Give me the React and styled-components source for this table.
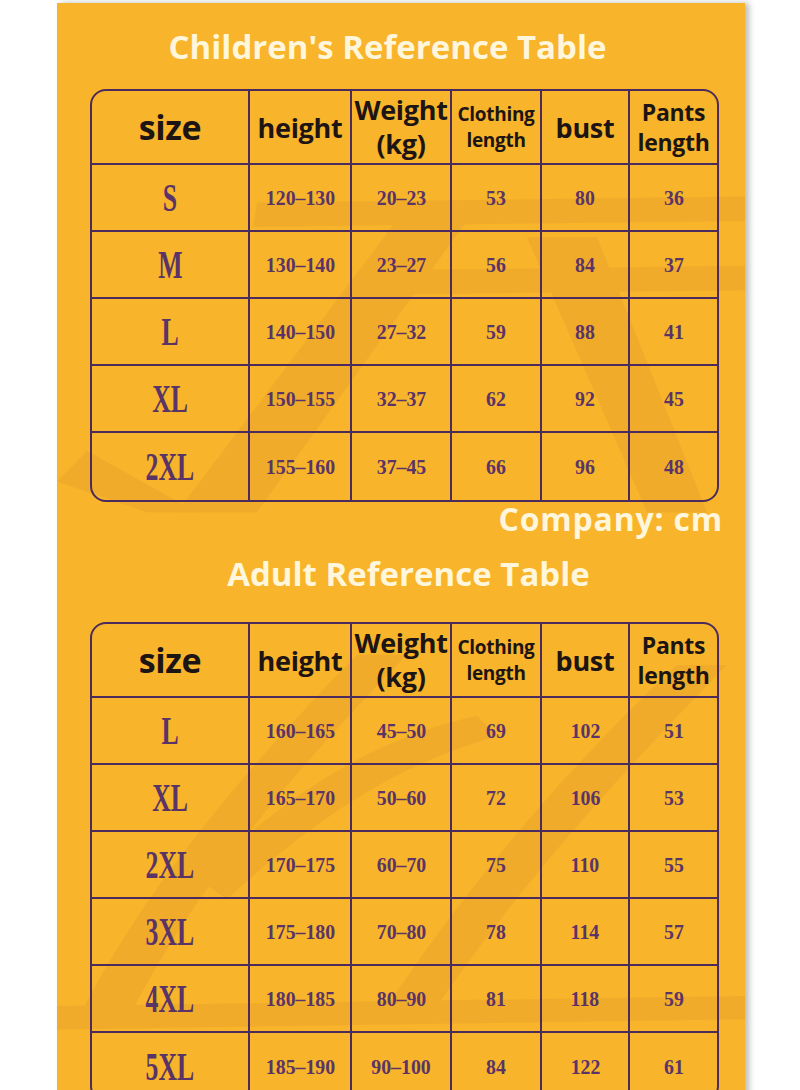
import styled, { createGlobalStyle } from 'styled-components';

const childRows = [
  ['S', '120-130', '20-23', '53', '80', '36'],
  ['M', '130-140', '23-27', '56', '84', '37'],
  ['L', '140-150', '27-32', '59', '88', '41'],
  ['XL', '150-155', '32-37', '62', '92', '45'],
  ['2XL', '155-160', '37-45', '66', '96', '48'],
];

const adultRows = [
  ['L', '160-165', '45-50', '69', '102', '51'],
  ['XL', '165-170', '50-60', '72', '106', '53'],
  ['2XL', '170-175', '60-70', '75', '110', '55'],
  ['3XL', '175-180', '70-80', '78', '114', '57'],
  ['4XL', '180-185', '80-90', '81', '118', '59'],
  ['5XL', '185-190', '90-100', '84', '122', '61'],
];

function Watermark() {
  return (
    <Styled.Watermark viewBox="0 0 688 1090" preserveAspectRatio="none">
      <g fill="#d98f2c" opacity="0.22">
        <path d="M200 196 L688 190 L688 214 L196 220 Z" />
        <path d="M360 262 L688 258 L688 282 L356 286 Z" />
        <path d="M120 500 L200 500 L420 200 L350 200 Z" />
        <path d="M470 230 L540 230 L650 500 L590 500 Z" />
        <path d="M0 470 L30 440 L140 500 L90 500 Z" />
        <path d="M20 1000 C80 880 180 760 300 640 L350 640 C230 760 130 880 70 1000 Z" />
        <path d="M320 1000 C400 880 500 760 620 650 L670 650 C560 760 450 880 370 1000 Z" />
        <path d="M0 985 L688 975 L688 998 L0 1008 Z" />
        <path d="M140 860 C250 760 330 720 420 700 L440 720 C350 745 270 790 170 880 Z" />
      </g>
    </Styled.Watermark>
  );
}

function SizeTable({ rows, top }) {
  return (
    <Styled.Table $top={top}>
      <Styled.HeadCell>
        <Styled.HeadText $size={34}>size</Styled.HeadText>
      </Styled.HeadCell>
      <Styled.HeadCell>
        <Styled.HeadText $size={27}>height</Styled.HeadText>
      </Styled.HeadCell>
      <Styled.HeadCell>
        <Styled.HeadText $size={27} $lh={34}>
          Weight
          <br />
          (kg)
        </Styled.HeadText>
      </Styled.HeadCell>
      <Styled.HeadCell>
        <Styled.HeadText $size={19} $lh={26}>
          Clothing
          <br />
          length
        </Styled.HeadText>
      </Styled.HeadCell>
      <Styled.HeadCell>
        <Styled.HeadText $size={27}>bust</Styled.HeadText>
      </Styled.HeadCell>
      <Styled.HeadCell $last>
        <Styled.HeadText $size={23} $lh={30}>
          Pants
          <br />
          length
        </Styled.HeadText>
      </Styled.HeadCell>
      {rows.map((row, r) =>
        row.map((value, c) => (
          <Styled.Cell key={`${r}-${c}`} $last={c === row.length - 1} $bottom={r === rows.length - 1}>
            {c === 0 ? (
              <Styled.SizeLabel>{value}</Styled.SizeLabel>
            ) : (
              <Styled.Value>{value.replace('-', '\u2013')}</Styled.Value>
            )}
          </Styled.Cell>
        ))
      )}
    </Styled.Table>
  );
}

export default function App() {
  return (
    <>
      <GlobalStyle />
      <Styled.Page>
        <Styled.Panel>
          <Watermark />
          <Styled.Content>
            <Styled.Title $shift={-34} $top={20}>
              Children's Reference Table
            </Styled.Title>
            <SizeTable rows={childRows} top={18} />
            <Styled.Unit>Company: cm</Styled.Unit>
            <Styled.Title $shift={4} $top={12}>
              Adult Reference Table
            </Styled.Title>
            <SizeTable rows={adultRows} top={24} />
          </Styled.Content>
        </Styled.Panel>
      </Styled.Page>
    </>
  );
}

const GlobalStyle = createGlobalStyle`
  html, body {
    margin: 0;
    padding: 0;
    background: #ffffff;
  }
  * {
    box-sizing: border-box;
  }
`;

const line = '#4b2b5d';

const Styled = {
  Page: styled.div`
    width: 800px;
    height: 1090px;
    overflow: hidden;
    background: #ffffff;
  `,
  Panel: styled.div`
    position: relative;
    margin: 3px 0 0 57px;
    width: 688px;
    height: 1110px;
    background: #f8b42a;
    box-shadow: 4px 0 6px rgba(60, 60, 60, 0.35);
  `,
  Watermark: styled.svg`
    position: absolute;
    inset: 0;
    width: 100%;
    height: 100%;
  `,
  Content: styled.div`
    position: relative;
    display: flex;
    flex-direction: column;
    padding: 0 26px 0 33px;
  `,
  Title: styled.h1`
    margin: ${(p) => p.$top}px 0 0;
    padding-left: ${(p) => (p.$shift > 0 ? p.$shift * 2 : 0)}px;
    padding-right: ${(p) => (p.$shift < 0 ? -p.$shift : 0)}px;
    height: 48px;
    line-height: 48px;
    text-align: center;
    font-family: 'Open Sans', 'Noto Sans', sans-serif;
    font-weight: 700;
    font-size: 33px;
    color: #fff6dc;
    letter-spacing: 0;
    white-space: nowrap;
  `,
  Unit: styled.div`
    margin: 0 -4px 0 0;
    height: 36px;
    line-height: 34px;
    text-align: right;
    font-family: 'Open Sans', 'Noto Sans', sans-serif;
    font-weight: 700;
    font-size: 32px;
    letter-spacing: 0.8px;
    color: #fff6dc;
    white-space: nowrap;
  `,
  Table: styled.div`
    margin-top: ${(p) => p.$top}px;
    width: 629px;
    display: grid;
    grid-template-columns: 158px 102px 100px 90px 88px 1fr;
    grid-template-rows: 74px;
    grid-auto-rows: 67px;
    border: 2px solid ${line};
    border-radius: 16px;
    overflow: hidden;
  `,
  HeadCell: styled.div`
    display: flex;
    align-items: center;
    justify-content: center;
    border-right: ${(p) => (p.$last ? 'none' : `2px solid ${line}`)};
    border-bottom: 2px solid ${line};
  `,
  HeadText: styled.span`
    font-family: 'Open Sans', 'Noto Sans', sans-serif;
    font-weight: 700;
    font-size: ${(p) => p.$size}px;
    line-height: ${(p) => p.$lh || p.$size + 6}px;
    color: #1d1414;
    text-align: center;
    letter-spacing: -0.3px;
  `,
  Cell: styled.div`
    display: flex;
    align-items: center;
    justify-content: center;
    border-right: ${(p) => (p.$last ? 'none' : `2px solid ${line}`)};
    border-bottom: ${(p) => (p.$bottom ? 'none' : `2px solid ${line}`)};
  `,
  SizeLabel: styled.span`
    display: inline-block;
    font-family: 'Liberation Serif', 'DejaVu Serif', serif;
    font-weight: 700;
    font-size: 39px;
    line-height: 44px;
    color: #5a3466;
    transform: scaleX(0.66);
  `,
  Value: styled.span`
    display: inline-block;
    font-family: 'Liberation Serif', 'DejaVu Serif', serif;
    font-weight: 700;
    font-size: 22px;
    line-height: 26px;
    color: #5a3466;
    transform: scaleX(0.9);
    white-space: nowrap;
  `,
};
